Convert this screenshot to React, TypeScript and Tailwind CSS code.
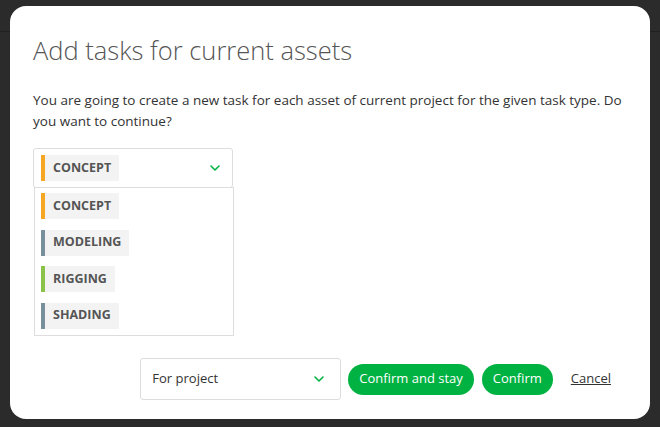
import React from "react";

const Chevron = ({ className = "" }: { className?: string }) => (
  <svg width="10" height="6" viewBox="0 0 10 6" className={className} fill="none">
    <path d="M1 1l4 4 4-4" stroke="#00b242" strokeWidth="1.6" strokeLinecap="round" strokeLinejoin="round" />
  </svg>
);

const Tag = ({ name, color }: { name: string; color: string }) => (
  <div className="flex h-[26px] items-stretch">
    <div className="w-[4px]" style={{ backgroundColor: color }} />
    <div className="flex items-center bg-[#f3f3f3] px-[8px] text-[12.5px] font-bold text-[#555]">{name}</div>
  </div>
);

const items = [
  { name: "CONCEPT", color: "#f5a623" },
  { name: "MODELING", color: "#78909c" },
  { name: "RIGGING", color: "#8bc34a" },
  { name: "SHADING", color: "#78909c" },
];

export default function App() {
  return (
    <div
      className="relative h-[427px] w-[660px] overflow-hidden bg-[#2b2b2b] px-[10px] pt-[6px]"
      style={{ fontFamily: '"Open Sans", "Noto Sans", sans-serif' }}
    >
      <div className="absolute left-0 right-0 top-[31px] h-px bg-[#202020]" />
      <div className="relative flex h-[413px] flex-col rounded-2xl bg-white px-[23px] pt-[27px] pb-[19px]">
        <h1 className="text-[25.5px] font-light leading-[34px] text-[#555]">Add tasks for current assets</h1>
        <p className="mt-[23px] text-[13.5px] leading-[21px] text-[#333]">
          You are going to create a new task for each asset of current project for the given task type. Do you want to
          continue?
        </p>
        <div className="relative mt-[16px] w-[200px]">
          <div className="flex h-[40px] items-center justify-between rounded-[3px] border border-[#ddd] pl-[7px] pr-[12px]">
            <Tag name="CONCEPT" color="#f5a623" />
            <Chevron />
          </div>
          <div className="absolute left-[1px] top-[39px] flex w-[200px] flex-col gap-[10.5px] border border-[#ddd] bg-white pl-[6px] pt-[5px] pb-[6px]">
            {items.map((it) => (
              <Tag key={it.name} name={it.name} color={it.color} />
            ))}
          </div>
        </div>
        <div className="mt-auto flex items-center justify-end pr-[16px]">
          <div className="mr-[7px] flex h-[42px] w-[201px] items-center justify-between rounded-[3px] border border-[#ddd] pl-[11px] pr-[16px] text-[13px] text-[#333]">
            <span>For project</span>
            <Chevron />
          </div>
          <button className="h-[31px] rounded-full bg-[#00b242] px-[11px] text-[13px] text-white">Confirm and stay</button>
          <button className="ml-[8px] h-[31px] rounded-full bg-[#00b242] px-[11px] text-[13px] text-white">Confirm</button>
          <button className="ml-[18px] text-[13px] text-[#333] underline">Cancel</button>
        </div>
      </div>
    </div>
  );
}
